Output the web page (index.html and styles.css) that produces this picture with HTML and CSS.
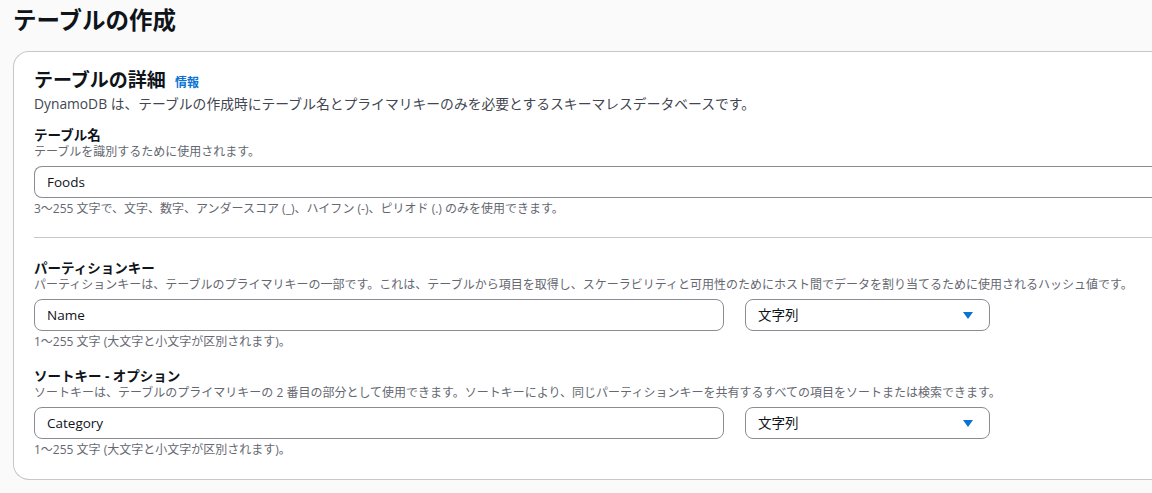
FILE: index.html
```html
<!DOCTYPE html>
<html lang="ja">
<head>
<meta charset="utf-8">
<title>テーブルの作成</title>
<link rel="stylesheet" href="styles.css">
</head>
<body>
<div class="page">
  <h1 class="page-title">テーブルの作成</h1>
  <section class="card">
    <div class="card-header">
      <h2 class="card-title">テーブルの詳細</h2>
      <a class="info-link" href="#">情報</a>
    </div>
    <p class="card-desc">DynamoDB は、テーブルの作成時にテーブル名とプライマリキーのみを必要とするスキーマレスデータベースです。</p>

    <div class="field field-first">
      <div class="label">テーブル名</div>
      <div class="hint">テーブルを識別するために使用されます。</div>
      <div class="input input-wide">Foods</div>
      <div class="constraint">3〜255 文字で、文字、数字、アンダースコア (_)、ハイフン (-)、ピリオド (.) のみを使用できます。</div>
    </div>

    <hr class="divider">

    <div class="field field-partition">
      <div class="label">パーティションキー</div>
      <div class="hint">パーティションキーは、テーブルのプライマリキーの一部です。これは、テーブルから項目を取得し、スケーラビリティと可用性のためにホスト間でデータを割り当てるために使用されるハッシュ値です。</div>
      <div class="key-row">
        <div class="input">Name</div>
        <div class="input select">
          <span>文字列</span>
          <svg class="caret" width="10" height="7" viewBox="0 0 10 7"><path d="M0 0 H10 L5 7 Z" fill="#0972d3"/></svg>
        </div>
      </div>
      <div class="constraint">1〜255 文字 (大文字と小文字が区別されます)。</div>
    </div>

    <div class="field field-sort">
      <div class="label">ソートキー - オプション</div>
      <div class="hint">ソートキーは、テーブルのプライマリキーの 2 番目の部分として使用できます。ソートキーにより、同じパーティションキーを共有するすべての項目をソートまたは検索できます。</div>
      <div class="key-row">
        <div class="input">Category</div>
        <div class="input select">
          <span>文字列</span>
          <svg class="caret" width="10" height="7" viewBox="0 0 10 7"><path d="M0 0 H10 L5 7 Z" fill="#0972d3"/></svg>
        </div>
      </div>
      <div class="constraint">1〜255 文字 (大文字と小文字が区別されます)。</div>
    </div>
  </section>
</div>
</body>
</html>
```

FILE: styles.css
```css
* { box-sizing: border-box; }

html, body {
  margin: 0;
  padding: 0;
  background: #fafafa;
  overflow: hidden;
}

body {
  font-family: "Open Sans", "Noto Sans CJK JP", sans-serif;
  color: #0f141a;
  width: 1152px;
  height: 493px;
}

.page {
  padding-left: 13px;
}

.page-title {
  margin: 0;
  padding-top: 4px;
  font-size: 23.5px;
  line-height: 32px;
  font-weight: 700;
  color: #0f141a;
}

/* The card continues past the right edge of the window in the
   reference, so its right side is open. */
.card {
  margin-top: 15px;
  background: #ffffff;
  border: 1px solid #c6c6cd;
  border-right: 0;
  border-radius: 16px 0 0 16px;
  padding: 16px 0 21px 20px;
}

.card-header {
  display: flex;
  align-items: baseline;
  gap: 9px;
}

.card-title {
  margin: 0;
  font-size: 19px;
  line-height: 24px;
  font-weight: 700;
}

.info-link {
  font-size: 12px;
  font-weight: 700;
  color: #0972d3;
  text-decoration: none;
}

.card-desc {
  margin: 2px 0 0 0;
  font-size: 13.8px;
  line-height: 20px;
  color: #424650;
}

.field-first { margin-top: 12px; }
.field-partition { margin-top: 21px; }
.field-sort { margin-top: 17px; }

.label {
  font-size: 13.5px;
  line-height: 18px;
  font-weight: 700;
}

.hint {
  font-size: 12px;
  line-height: 16px;
  color: #656871;
  white-space: nowrap;
}

.input {
  margin-top: 6px;
  height: 32px;
  border: 1px solid #8c8c94;
  border-radius: 8px;
  background: #ffffff;
  padding: 0 12px;
  font-size: 13.5px;
  line-height: 30px;
  color: #0f141a;
}

.input-wide {
  border-right: 0;
  border-radius: 8px 0 0 8px;
}

.key-row {
  margin-top: 6px;
  display: grid;
  grid-template-columns: 690px 245px;
  column-gap: 21px;
}

.key-row .input { margin-top: 0; }

.select {
  display: flex;
  align-items: center;
  justify-content: space-between;
  padding-right: 16px;
}

.caret { display: block; }

.constraint {
  margin-top: 3px;
  font-size: 12px;
  line-height: 16px;
  color: #656871;
  white-space: nowrap;
}

.divider {
  margin: 20px 0 0 0;
  border: 0;
  border-top: 1px solid #c6c6cd;
  height: 0;
}
```
